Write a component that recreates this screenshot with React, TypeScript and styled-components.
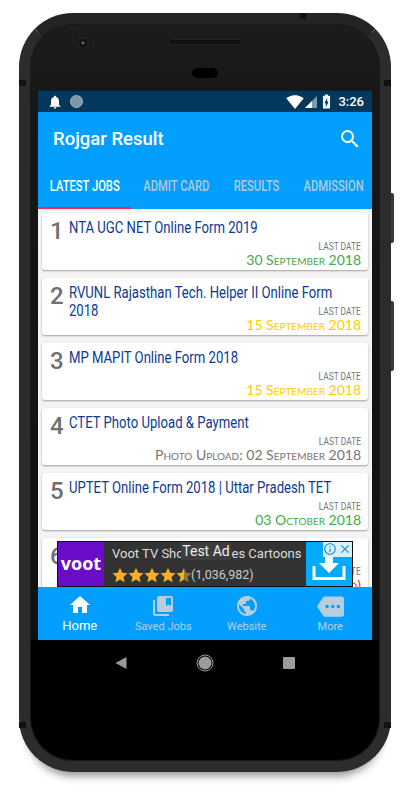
import React from "react";
import styled, { createGlobalStyle } from "styled-components";
import { MdHome, MdCollectionsBookmark, MdPublic, MdMore, MdSearch, MdNotifications, MdSignalWifi4Bar, MdBatteryChargingFull, MdInfoOutline, MdClose } from "react-icons/md";

const Global = createGlobalStyle`
  html, body { margin: 0; padding: 0; background: #fff; width: 413px; height: 800px; overflow: hidden; }
  * { box-sizing: border-box; }
  body { font-family: Roboto, sans-serif; }
`;

const Page = styled.div`
  width: 413px;
  height: 800px;
  padding: 13px 0 0 19px;
`;

const Phone = styled.div`
  position: relative;
  width: 372px;
  height: 759px;
  border-radius: 54px;
  border: 11px solid #2c2c2c;
  border-top-color: #242424;
  padding: 66px 8px 0;
  background: linear-gradient(#1c1c1c 0, #171717 80px, #101010 615px, #000 617px);
  box-shadow: 0 12px 9px -8px rgba(0, 0, 0, 0.42), inset 0 0 0 1px #191919;
`;

const SideButton = styled.div<{ $top: number; $height: number }>`
  position: absolute;
  right: -14px;
  top: ${(p) => p.$top}px;
  width: 3px;
  height: ${(p) => p.$height}px;
  background: #3a3a3a;
  border-radius: 0 2px 2px 0;
`;

const SideBand = styled.div<{ $top: number; $side: "left" | "right" }>`
  position: absolute;
  ${(p) => p.$side}: -11px;
  top: ${(p) => p.$top}px;
  width: 7px;
  height: 6px;
  background: #111;
`;

const TopBand = styled.div`
  position: absolute;
  left: 270px;
  top: -11px;
  width: 6px;
  height: 6px;
  background: #111;
`;

const Camera = styled.div`
  position: absolute;
  left: 46px;
  top: 12px;
  width: 14px;
  height: 14px;
  border-radius: 50%;
  background: radial-gradient(circle, #6f6a40 0 1px, #111 2px 4px, #252525 5px, #161616 7px);
`;

const Speaker = styled.div`
  position: absolute;
  left: 138px;
  top: 15px;
  width: 74px;
  height: 6px;
  border-radius: 3px;
  background: #111;
  border: 1px solid #242424;
`;

const Sensor = styled.div`
  position: absolute;
  left: 162px;
  top: 44px;
  width: 26px;
  height: 10px;
  border-radius: 5px;
  background: #000;
`;

const Screen = styled.div`
  width: 334px;
  height: 550px;
  display: flex;
  flex-direction: column;
  position: relative;
  background: #f4f4f4;
`;

const StatusBar = styled.div`
  height: 22px;
  flex: none;
  background: #03385c;
  border-top: 1px solid #02243c;
  display: flex;
  align-items: center;
  padding: 0 8px 0 9px;
  color: #fff;
`;

const StatusDot = styled.div`
  width: 13px;
  height: 13px;
  border-radius: 50%;
  margin-left: 7px;
  background: #7e97a8;
  border: 1px solid #a4b6c2;
`;

const Spacer = styled.div`
  flex: 1;
`;

const Clock = styled.span`
  font: 500 13px Roboto, sans-serif;
  color: #fff;
  margin-left: 3px;
`;

const Header = styled.header`
  background: #039fff;
  flex: none;
`;

const Toolbar = styled.div`
  height: 54px;
  display: flex;
  align-items: center;
  justify-content: space-between;
  padding: 0 10px 0 15px;
  color: #fff;
`;

const Title = styled.h1`
  margin: 0;
  font: 500 18.5px Roboto, sans-serif;
  color: #fff;
`;

const Tabs = styled.div`
  height: 43px;
  display: flex;
  overflow: hidden;
`;

const Tab = styled.div<{ $active?: boolean; $width: number }>`
  flex: none;
  width: ${(p) => p.$width}px;
  height: 43px;
  padding-bottom: 2px;
  display: flex;
  align-items: center;
  justify-content: center;
  white-space: nowrap;
  font: 500 14px Roboto, sans-serif;
  color: ${(p) => (p.$active ? "#fff" : "#b5c9d8")};
  border-bottom: 2px solid ${(p) => (p.$active ? "#f6274a" : "transparent")};
`;

const TabLabel = styled.span`
  flex: none;
  display: inline-block;
  transform: scaleX(0.8);
`;

const List = styled.div`
  flex: 1;
  min-height: 0;
  overflow: hidden;
  padding: 4px 4px 0;
  display: flex;
  flex-direction: column;
  gap: 8px;
  position: relative;
`;

const Card = styled.article`
  flex: none;
  height: 57px;
  background: #fff;
  border-radius: 3px;
  box-shadow: 0 1px 2px rgba(0, 0, 0, 0.35);
  display: grid;
  grid-template-columns: 19px 1fr;
  grid-template-rows: 1fr;
  padding: 6px 7px 2px 8px;
`;

const Rank = styled.div`
  grid-row: 1;
  grid-column: 1;
  font: 500 24px/24px Roboto, sans-serif;
  color: #707070;
`;

const JobTitle = styled.div`
  grid-row: 1;
  grid-column: 2;
  width: 122%;
  transform: scaleX(0.82);
  transform-origin: left top;
  font: 400 16px/17.5px Roboto, sans-serif;
  color: #0b3a94;
`;

const Meta = styled.div`
  grid-row: 1;
  grid-column: 2;
  align-self: end;
  justify-self: end;
  text-align: right;
`;

const MetaLabel = styled.div`
  font: 400 10.5px/11px Roboto, sans-serif;
  color: #777;
  transform: scaleX(0.8);
  transform-origin: right center;
`;

const MetaDate = styled.div<{ $color: string }>`
  font: 400 14px/16px Lato, sans-serif;
  font-variant: small-caps;
  white-space: nowrap;
  color: ${(p) => p.$color};
`;

const Ad = styled.aside`
  position: absolute;
  left: 19px;
  top: 332px;
  width: 296px;
  height: 46px;
  display: flex;
  border: 1px solid #111;
  background: #333;
`;

const AdLogo = styled.div`
  width: 46px;
  flex: none;
  background: #6a0dc8;
  color: #fff;
  font: 700 18px/42px "Open Sans", sans-serif;
  text-align: center;
`;

const AdBody = styled.div`
  flex: 1;
  min-width: 0;
  padding: 3px 0 0 8px;
  color: #ddd;
  font: 400 13px/18px Roboto, sans-serif;
  white-space: nowrap;
`;

const AdRating = styled.div`
  display: flex;
  align-items: center;
  margin-top: 4px;
  font-size: 12.5px;
  line-height: 16px;
  color: #ccc;
`;

const AdAction = styled.div`
  width: 46px;
  flex: none;
  background: #03a9fb;
  color: #fff;
  position: relative;
  display: flex;
  align-items: flex-end;
  justify-content: center;
  padding-bottom: 5px;
`;

const AdChoices = styled.div`
  position: absolute;
  top: 0;
  right: 0;
  height: 15px;
  display: flex;
  background: #d8f0fc;
  color: #1b8ecb;
  gap: 1px;
`;

const TestAd = styled.div`
  position: absolute;
  left: 123px;
  top: 0;
  width: 50px;
  height: 18px;
  background: #3d3d3d;
  color: #eee;
  font: 400 14px/18px Roboto, sans-serif;
  text-align: center;
  white-space: nowrap;
`;

const BottomNav = styled.nav`
  height: 53px;
  flex: none;
  background: #039fff;
  display: grid;
  grid-template-columns: repeat(4, 1fr);
  position: relative;
`;

const NavItem = styled.div<{ $active?: boolean }>`
  display: flex;
  flex-direction: column;
  align-items: center;
  padding-top: ${(p) => (p.$active ? 6 : 7)}px;
  color: ${(p) => (p.$active ? "#fff" : "#b9cedd")};
  font-size: ${(p) => (p.$active ? 13 : 11)}px;
  line-height: 14px;
`;

const NavIcon = styled.div`
  height: 24px;
  margin-bottom: 2px;
  display: flex;
  align-items: center;
`;

const SystemNav = styled.div`
  width: 334px;
  height: 46px;
  background: #000;
  display: grid;
  grid-template-columns: repeat(3, 84px);
  justify-content: center;
  align-items: center;
  justify-items: center;
`;

const Stars = () => (
  <svg width="79" height="16" viewBox="0 0 79 16" aria-hidden="true">
    <defs>
      <linearGradient id="half">
        <stop offset="50%" stopColor="#f5b21a" />
        <stop offset="50%" stopColor="#8a7a4a" />
      </linearGradient>
    </defs>
    {[0, 1, 2, 3, 4].map((i) => (
      <path
        key={i}
        transform={`translate(${i * 16} 0)`}
        d="M8 .8l2.2 4.9 5.3.6-4 3.6 1.1 5.3L8 12.5l-4.6 2.7 1.1-5.3-4-3.6 5.3-.6z"
        fill={i === 4 ? "url(#half)" : "#f5b21a"}
      />
    ))}
  </svg>
);

const InstallIcon = () => (
  <svg width="34" height="27" viewBox="0 0 34 27" aria-hidden="true">
    <path d="M2 12v12.500h30V12" fill="none" stroke="#fff" strokeWidth="3" />
    <path d="M13 1h8v8h6L17 19 7 9h6z" fill="#fff" />
  </svg>
);

const jobs = [
  { title: "NTA UGC NET Online Form 2019", date: "30 September 2018", color: "#43a947" },
  { title: "RVUNL Rajasthan Tech. Helper II Online Form 2018", date: "15 September 2018", color: "#ffcc00" },
  { title: "MP MAPIT Online Form 2018", date: "15 September 2018", color: "#ffcc00" },
  { title: "CTET Photo Upload & Payment", date: "Photo Upload: 02 September 2018", color: "#757575" },
  { title: "UPTET Online Form 2018 | Uttar Pradesh TET", date: "03 October 2018", color: "#43a947" },
  { title: "UP Police Online Form 2018", date: "25 September 2018 (Extended)", color: "#e53935" },
];

const tabs = [
  { label: "LATEST JOBS", width: 93 },
  { label: "ADMIT CARD", width: 91 },
  { label: "RESULTS", width: 69 },
  { label: "ADMISSION", width: 85 },
];

export default function App() {
  return (
    <Page>
      <Global />
      <Phone>
        <SideButton $top={169} $height={50} />
        <SideButton $top={277} $height={70} />
        <TopBand />
        <SideBand $side="left" $top={56} />
        <SideBand $side="right" $top={56} />
        <SideBand $side="left" $top={698} />
        <SideBand $side="right" $top={698} />
        <Camera />
        <Speaker />
        <Sensor />
        <Screen>
          <StatusBar>
            <MdNotifications size={16} />
            <StatusDot />
            <Spacer />
            <MdSignalWifi4Bar size={18} />
            <svg width="14" height="14" viewBox="0 0 14 14" aria-hidden="true">
              <path d="M13 1v12H1z" fill="#7f98aa" />
              <path d="M8 6v7H1z" fill="#fff" />
            </svg>
            <MdBatteryChargingFull size={17} />
            <Clock>3:26</Clock>
          </StatusBar>
          <Header>
            <Toolbar>
              <Title>Rojgar Result</Title>
              <MdSearch size={24} />
            </Toolbar>
            <Tabs>
              {tabs.map((tab, i) => (
                <Tab key={tab.label} $active={i === 0} $width={tab.width}>
                  <TabLabel>{tab.label}</TabLabel>
                </Tab>
              ))}
            </Tabs>
          </Header>
          <List>
            {jobs.map((job, i) => (
              <Card key={job.title}>
                <Rank>{i + 1}</Rank>
                <JobTitle>{job.title}</JobTitle>
                <Meta>
                  <MetaLabel>LAST DATE</MetaLabel>
                  <MetaDate $color={job.color}>{job.date}</MetaDate>
                </Meta>
              </Card>
            ))}
            <Ad>
              <AdLogo>voot</AdLogo>
              <AdBody>
                Voot TV Shows Movies Cartoons
                <AdRating>
                  <Stars />
                  (1,036,982)
                </AdRating>
              </AdBody>
              <AdAction>
                <InstallIcon />
                <AdChoices>
                  <MdInfoOutline size={14} />
                  <MdClose size={14} />
                </AdChoices>
              </AdAction>
              <TestAd>Test Ad</TestAd>
            </Ad>
          </List>
          <BottomNav>
            <NavItem $active>
              <NavIcon><MdHome size={24} /></NavIcon>
              Home
            </NavItem>
            <NavItem>
              <NavIcon><MdCollectionsBookmark size={24} /></NavIcon>
              Saved Jobs
            </NavItem>
            <NavItem>
              <NavIcon><MdPublic size={24} /></NavIcon>
              Website
            </NavItem>
            <NavItem>
              <NavIcon><MdMore size={27} /></NavIcon>
              More
            </NavItem>
          </BottomNav>
        </Screen>
        <SystemNav>
          <svg width="12" height="14" viewBox="0 0 12 14" aria-hidden="true"><path d="M11.500 1v12L.5 7z" fill="#9b9b9b" /></svg>
          <svg width="18" height="18" viewBox="0 0 18 18" aria-hidden="true"><circle cx="9" cy="9" r="6.500" fill="#9b9b9b" /><circle cx="9" cy="9" r="8" fill="none" stroke="#9b9b9b" /></svg>
          <svg width="12" height="12" viewBox="0 0 12 12" aria-hidden="true"><rect width="12" height="12" rx="1" fill="#9b9b9b" /></svg>
        </SystemNav>
      </Phone>
    </Page>
  );
}
